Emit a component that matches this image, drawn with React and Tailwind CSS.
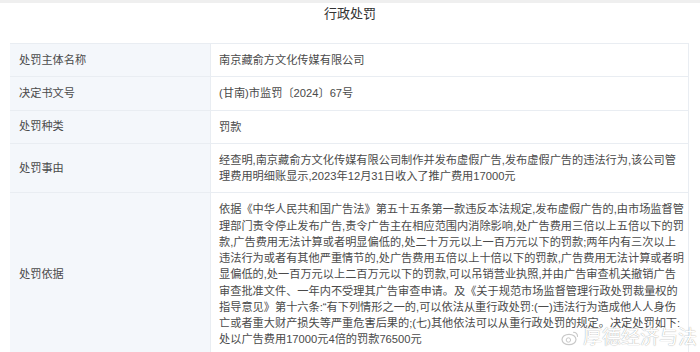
const rows = [
  { label: "处罚主体名称", lines: ["南京藏俞方文化传媒有限公司"] },
  { label: "决定书文号", lines: ["(甘南)市监罚〔2024〕67号"] },
  { label: "处罚种类", lines: ["罚款"] },
  {
    label: "处罚事由",
    lines: [
      "经查明,南京藏俞方文化传媒有限公司制作并发布虚假广告,发布虚假广告的违法行为,该公司管",
      "理费用明细账显示,2023年12月31日收入了推广费用17000元",
    ],
  },
  {
    label: "处罚依据",
    lines: [
      "依据《中华人民共和国广告法》第五十五条第一款违反本法规定,发布虚假广告的,由市场监督管",
      "理部门责令停止发布广告,责令广告主在相应范围内消除影响,处广告费用三倍以上五倍以下的罚",
      "款,广告费用无法计算或者明显偏低的,处二十万元以上一百万元以下的罚款;两年内有三次以上",
      "违法行为或者有其他严重情节的,处广告费用五倍以上十倍以下的罚款,广告费用无法计算或者明",
      "显偏低的,处一百万元以上二百万元以下的罚款,可以吊销营业执照,并由广告审查机关撤销广告",
      "审查批准文件、一年内不受理其广告审查申请。及《关于规范市场监督管理行政处罚裁量权的",
      "指导意见》第十六条:\u201c有下列情形之一的,可以依法从重行政处罚:(一)违法行为造成他人人身伤",
      "亡或者重大财产损失等严重危害后果的;(七)其他依法可以从重行政处罚的规定。决定处罚如下:",
      "处以广告费用17000元4倍的罚款76500元",
    ],
  },
];

const WeiboMark = () => (
  <svg width="18" height="16" viewBox="0 0 18 16" fill="none">
    <ellipse cx="8" cy="9.5" rx="7" ry="5.2" stroke="#c9c9c9" strokeWidth="1.2" fill="rgba(255,255,255,0.6)" />
    <circle cx="7.4" cy="10" r="2.2" stroke="#c9c9c9" strokeWidth="1" />
    <path d="M12.5 2.2a4 4 0 0 1 4 4.2" stroke="#c9c9c9" strokeWidth="1.1" strokeLinecap="round" />
  </svg>
);

export default function App() {
  return (
    <div
      className="relative w-[700px] h-[352px] overflow-hidden bg-white text-[#4d4d4d]"
      style={{ fontFamily: '"Liberation Sans", "Noto Sans CJK SC", sans-serif' }}
    >
      <div className="h-[3px] bg-[#efefef]" />
      <div className="h-[40px] pt-[2px] text-center text-[13px] leading-[18px] text-[#333]">行政处罚</div>

      <div className="ml-[10px] w-[679px] border-t border-r border-[#e9edf2]">
        {rows.map((row, i) => (
          <div key={i} className="flex border-b border-[#e9edf2]">
            <div className="w-[201px] shrink-0 flex items-center bg-[#f4f7fb] border-r border-[#e9edf2] pl-[9px] text-[11.2px] text-[#4a4a4a]">
              {row.label}
            </div>
            <div className="flex-1 pl-[8px] py-[8px] text-[11.2px] leading-[16.25px] text-[#4a4a4a]">
              {row.lines.map((line, j) => (
                <div key={j} className="whitespace-nowrap">{line}</div>
              ))}
            </div>
          </div>
        ))}
      </div>

      {/* watermark */}
      <div className="absolute left-[561px] top-[327px] flex items-center gap-[4px]">
        <WeiboMark />
        <span className="text-[19px] leading-[22px] text-white [text-shadow:0_0_1px_rgba(0,0,0,0.45)]">
          厚德经济与法
        </span>
      </div>
    </div>
  );
}
